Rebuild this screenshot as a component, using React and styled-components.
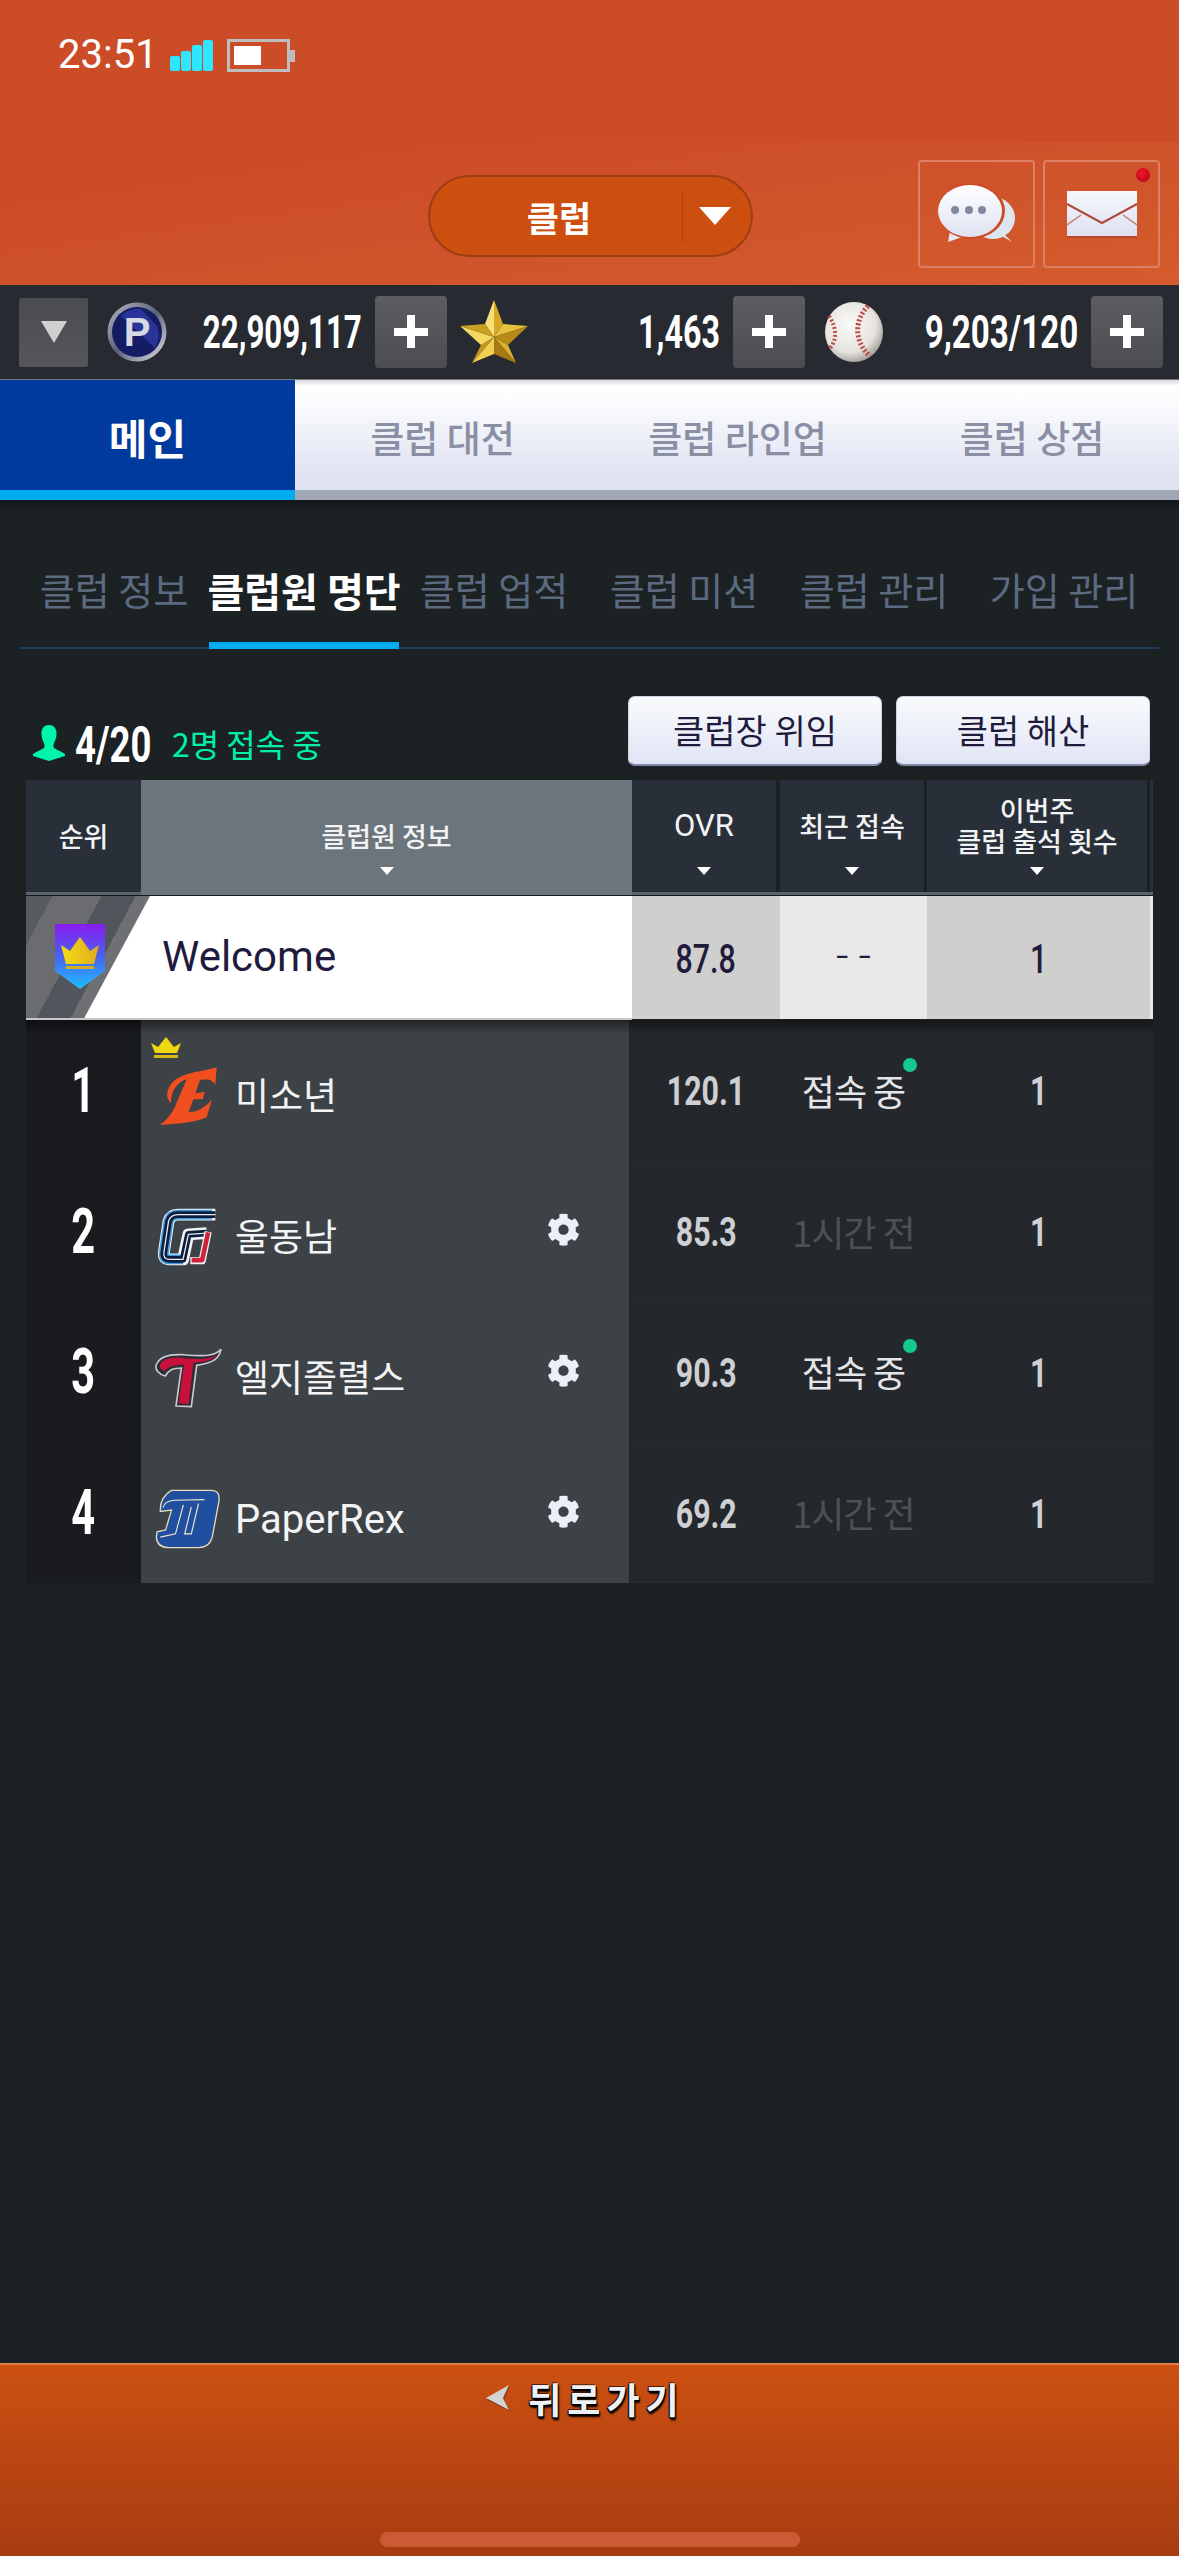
import React from "react";
import styled, { createGlobalStyle } from "styled-components";
import { FaCog } from "react-icons/fa";

const KR = `"Noto Sans CJK KR", "Noto Sans", sans-serif`;
const LAT = `Roboto, "Noto Sans CJK KR", sans-serif`;

const Global = createGlobalStyle`
  html, body { margin: 0; padding: 0; background: #1c2124; }
  * { box-sizing: border-box; }
  #root { width: 1179px; }
`;

const Page = styled.div`
  width: 1179px; height: 2556px; display: flex; flex-direction: column;
  background: #1c2124; overflow: hidden; font-family: ${KR};
`;

/* ---------- header ---------- */
const StatusBar = styled.div`
  height: 142px; background: #cc4c28; display: flex; align-items: flex-start;
  padding: 33px 0 0 58px;
`;
const Clock = styled.span`
  font: 400 40px/44px ${LAT}; color: #fff; width: 112px;
`;
const SignalBars = styled.div`
  display: flex; align-items: flex-end; gap: 1px; height: 31px; margin-top: 7px; width: 57px;
`;
const SignalBar = styled.i`
  display: block; width: 10px; height: ${p => p.$h}px; background: #2ee6ff; border-radius: 2px;
`;
const Battery = styled.div`
  width: 63px; height: 33px; margin-top: 6px; border: 3px solid #bdbdbd; padding: 4px;
  position: relative; display: flex;
  &::after { content: ""; position: absolute; right: -8px; top: 8px; width: 5px; height: 12px; background: #bdbdbd; }
`;
const BatteryFill = styled.i`
  display: block; width: 27px; background: #fff;
`;
const Nav = styled.div`
  height: 143px; background: linear-gradient(172deg, #cc4c28 20%, #d45c2d 100%);
  display: flex; align-items: flex-start; padding: 18px 0 0 428px;
`;
const Pill = styled.div`
  width: 325px; height: 82px; margin-top: 15px; border-radius: 41px;
  background: #cc4f10; border: 2px solid #9e3d14; display: flex; align-items: center;
`;
const PillLabel = styled.span`
  width: 252px; text-align: center; color: #fff; font: 700 35px/1 ${KR}; padding-left: 6px;
`;
const PillDivider = styled.i`
  display: block; width: 1px; height: 53px; background: #a34316;
`;
const PillArrow = styled.div`
  flex: 1; display: flex; justify-content: center; padding-right: 4px;
`;
const Caret = styled.i`
  display: block; width: 0; height: 0;
  border-left: ${p => p.$w / 2}px solid transparent;
  border-right: ${p => p.$w / 2}px solid transparent;
  border-top: ${p => p.$h}px solid ${p => p.$c || "#fff"};
`;
const IconBox = styled.div`
  width: 117px; height: 108px; border: 2px solid #dd7f62; border-radius: 4px;
  display: flex; align-items: center; justify-content: center; position: relative;
  margin-left: ${p => p.$ml}px;
`;
const RedDot = styled.i`
  position: absolute; right: 8px; top: 6px; width: 14px; height: 14px; border-radius: 50%;
  background: radial-gradient(circle at 40% 35%, #f0162a, #b00018);
`;

/* ---------- currency ---------- */
const CurrencyBar = styled.div`
  height: 95px; background: #282a31; display: flex; align-items: center; padding-left: 19px;
  border-bottom: 1px solid #77797f;
`;
const DropButton = styled.div`
  width: 69px; height: 69px; margin-right: 19px; display: flex; align-items: center; justify-content: center;
  background: linear-gradient(#4a4c52, #54565b); border-radius: 2px;
`;
const Slot = styled.div`
  width: ${p => p.$w}px; display: flex; justify-content: flex-end; white-space: nowrap;
`;
const Squeezed = styled.span`
  display: inline-block; font: ${p => p.$wt || 700} ${p => p.$fs}px/1 ${LAT};
  color: ${p => p.$c || "#fff"}; transform: scaleX(${p => p.$sx});
  transform-origin: ${p => p.$origin || "center"}; white-space: nowrap;
`;
const PlusButton = styled.div`
  width: 72px; height: 72px; margin: 0 ${p => p.$mr}px 0 13px; display: flex; align-items: center; justify-content: center;
  background: linear-gradient(#5c5d61, #4c4d52); border-radius: 4px; flex: none;
`;

/* ---------- tabs ---------- */
const Tabs = styled.div`
  height: 120px; display: grid; grid-template-columns: 295px 295px 295px 294px;
`;
const Tab = styled.div`
  display: flex; align-items: center; justify-content: center; padding-top: 4px;
  font: ${p => (p.$active ? 700 : 500)} ${p => (p.$active ? 42 : 37)}px/1 ${KR};
  color: ${p => (p.$active ? "#fff" : "#8a8fa3")};
  background: ${p => (p.$active ? "#003a9c" : "linear-gradient(#d8d9dd 0, #fff 6px, #f7f8fc 30%, #dfe3f2 85%)")};
  border-bottom: 10px solid ${p => (p.$active ? "#00aeef" : "#a0a6b4")};
`;

/* ---------- sub nav ---------- */
const SubNav = styled.div`
  height: 149px; padding: 44px 20px 0 19px; display: grid; grid-template-columns: repeat(6, 190px);
  background: linear-gradient(#11161b, #1c2124 10px);
`;
const SubItem = styled.div`
  height: 105px; display: flex; justify-content: center; padding-top: 24px; white-space: nowrap;
  font: ${p => (p.$active ? 700 : 400)} ${p => (p.$active ? 40 : 38)}px/1.1 ${KR};
  color: ${p => (p.$active ? "#fff" : "#5c6a80")};
  border-bottom: ${p => (p.$active ? "7px solid #00aeef" : "2px solid #1c3a60")};
`;

/* ---------- summary ---------- */
const Summary = styled.div`
  height: 131px; display: flex; align-items: flex-start; padding: 47px 0 0 33px;
`;
const PersonSlot = styled.div`
  margin-top: 29px; display: flex;
`;
const CountWrap = styled.div`
  width: 76px; margin-left: 10px; margin-top: 24px; display: flex; height: 40px;
`;
const OnlineText = styled.span`
  font: 400 32px/1 ${KR}; color: #00f0a8; margin: 31px 0 0 21px; width: 456px; white-space: nowrap; display: block;
`;
const ActionButton = styled.div`
  width: 254px; height: 70px; margin-right: 14px; display: flex; align-items: center; justify-content: center; padding-bottom: 2px;
  font: 400 34px/1 ${KR}; color: #1f1b3d; border-radius: 7px;
  background: linear-gradient(#fafbfe, #e0e4f4); border: 1px solid #cfd3e6; border-bottom: 2px solid #8088a8;
`;

/* ---------- table ---------- */
const Table = styled.div`
  margin-left: 26px; width: 1127px; display: flex; flex-direction: column;
`;
const HeadRow = styled.div`
  height: 116px; display: grid; grid-template-columns: 115px 491px 144px 4px 144px 3px 220px 3px 3px;
  border-bottom: 1px solid #15181c;
`;
const HeadCell = styled.div`
  display: flex; flex-direction: column; align-items: center; justify-content: flex-start;
  background: ${p => (p.$on ? "#6b757b" : "#292f38")};
  border-bottom: 3px solid ${p => (p.$on ? "#6b757b" : "#5a656b")};
  color: #f2f3f4; font: 500 27px/31px ${KR}; text-align: center; position: relative; white-space: nowrap;
  padding-top: ${p => p.$pt}px;
`;
const HeadLatin = styled.span`
  font: 400 31px/31px ${LAT};
`;
const HeadGap = styled.div`
  border-bottom: 3px solid #5a656b;
`;
const CaretSlot = styled.div`
  position: absolute; left: 0; right: 0; bottom: 17px; display: flex; justify-content: center;
`;
const MyRow = styled.div`
  height: 124px; display: grid; grid-template-columns: 606px 148px 147px 223px 3px;
`;
const MyInfo = styled.div`
  background: #fff; position: relative; display: flex; align-items: center; padding-left: 29px;
  border-bottom: 2px solid #c8c8c8;
  &::before {
    content: ""; position: absolute; inset: 0 auto 0 0; width: 124px;
    clip-path: polygon(0 0, 100% 0, 47% 100%, 0 100%);
    background: linear-gradient(118deg, #585b60 0 14%, #6a6c70 14% 40%, #52555b 40% 58%, #6e7074 58% 68%, #5c5f64 68% 80%, #6c6e72 80%);
  }
`;
const BadgeSvg = styled.svg`
  position: relative; flex: none; display: block;
`;
const MyName = styled.span`
  position: relative; margin-left: 57px; font: 400 42px/1 ${LAT}; color: #1f1b3d;
`;
const MyCell = styled.div`
  background: ${p => p.$bg}; display: flex; align-items: center; justify-content: center;
  font: 400 40px/1 ${LAT}; color: #1f1b3d; padding-top: 4px; margin-bottom: 1px;
`;
const Dashes = styled.span`
  font: 300 44px/1 ${LAT}; letter-spacing: 10px; margin-right: -10px; margin-top: -8px; color: #1f1b3d;
`;
const Rows = styled.div`
  height: 563px; display: grid; grid-auto-rows: 1fr; position: relative;
  &::after {
    content: ""; position: absolute; left: 0; right: 0; top: 0; height: 14px;
    background: linear-gradient(rgba(0,0,0,.45), rgba(0,0,0,0)); pointer-events: none;
  }
`;
const Row = styled.div`
  display: grid; grid-template-columns: 115px 488px 3px 148px 147px 223px 3px;
  background: #24272b;
`;
const RankCell = styled.div`
  background: #1a1b1f; display: flex; align-items: center; justify-content: center;
`;
const InfoCell = styled.div`
  background: #3d4247; position: relative; display: flex; align-items: center; padding: 12px 0 0 12px;
`;
const LeaderCrown = styled.svg`
  position: absolute; left: 10px; top: 17px; display: block;
`;
const LogoSlot = styled.div`
  width: 70px; height: 60px; flex: none; display: flex; align-items: center; justify-content: center;
`;
const Name = styled.span`
  margin: 3px 0 0 12px; font: 400 ${p => (p.$latin ? 40 : 37)}px/1 ${LAT}; color: #f2f3f5; white-space: nowrap;
`;
const GearSlot = styled.div`
  position: absolute; right: 49px; top: 50%; transform: translateY(-54%); color: #eceff8; display: flex;
`;
const ValueCell = styled.div`
  display: flex; align-items: center; justify-content: center; position: relative; padding-top: ${p => p.$pt || 0}px;
  border-bottom: 1px solid rgba(255,255,255,.025);
`;
const StatusText = styled.span`
  position: relative; font: 400 36px/1 ${KR}; color: ${p => (p.$on ? "#e4e5e8" : "#4c5156")}; letter-spacing: -1px; white-space: nowrap;
`;
const OnlineDot = styled.i`
  position: absolute; right: -12px; top: -14px; width: 14px; height: 14px; border-radius: 50%; background: #14c98c;
`;

/* ---------- footer ---------- */
const Footer = styled.div`
  margin-top: auto; height: 193px; border-top: 2px solid #e57a45;
  background: linear-gradient(#cc5012, #a83c12); display: flex; flex-direction: column; align-items: center;
`;
const BackRow = styled.div`
  display: flex; align-items: center; gap: 18px; margin-top: 13px; height: 40px; padding-right: 14px;
`;
const BackText = styled.span`
  font: 700 36px/40px ${KR}; letter-spacing: 6px; color: #eef2f6; margin-right: -6px;
  text-shadow: 0 2px 0 #000, 1px 3px 2px #000, -1px 1px 1px #000, 1px 1px 1px #000, -1px -1px 0 rgba(0,0,0,.6);
`;
const HomeBar = styled.i`
  display: block; width: 420px; height: 15px; border-radius: 8px; background: #cb5a35; margin-top: 114px;
`;

/* ---------- drawings ---------- */
const Plus = () => (
  <svg width="34" height="34" viewBox="0 0 34 34">
    <rect x="13" y="1" width="8" height="32" fill="#000" opacity=".35" />
    <rect x="0" y="13" width="34" height="8" fill="#fff" />
    <rect x="13" y="0" width="8" height="33" fill="#fff" />
  </svg>
);

const Coin = () => (
  <svg width="60" height="60" viewBox="0 0 60 60">
    <defs>
      <linearGradient id="coinRim" x1="0" y1="0" x2="1" y2="1">
        <stop offset="0" stopColor="#b8bcc8" /><stop offset=".5" stopColor="#5a6078" /><stop offset="1" stopColor="#e6e8ee" />
      </linearGradient>
    </defs>
    <circle cx="30" cy="30" r="29.5" fill="url(#coinRim)" />
    <circle cx="30" cy="30" r="25" fill="#141c64" />
    <path d="M14 14 L48 46 A25 25 0 0 0 50 24 L34 7 A25 25 0 0 0 14 14Z" fill="#28349a" />
    <text x="30" y="44" textAnchor="middle" fontFamily="Liberation Sans, sans-serif" fontWeight="700" fontSize="40" fill="#d6dae4">P</text>
  </svg>
);

const Star = () => {
  const c = [34, 37];
  const outer = [[34, 0], [68, 26], [56, 63], [12, 63], [0, 26]];
  const inner = [[43, 24], [48, 45], [34, 54], [21, 45], [25, 24]];
  const light = ["#f6e07a", "#e8c23c", "#dcb030", "#f0d050", "#f4d95e"];
  const dark = ["#d8a824", "#b98a18", "#a87a12", "#c4961e", "#cc9e20"];
  const tris = [];
  outer.forEach((o, i) => {
    const prev = inner[(i + 4) % 5];
    const next = inner[i];
    tris.push(<polygon key={`a${i}`} points={`${c} ${prev} ${o}`} fill={light[i]} />);
    tris.push(<polygon key={`b${i}`} points={`${c} ${o} ${next}`} fill={dark[i]} />);
  });
  return <svg width="68" height="64" viewBox="0 0 68 64">{tris}</svg>;
};

const Ball = () => (
  <svg width="60" height="60" viewBox="0 0 60 60">
    <defs>
      <radialGradient id="ballFill" cx=".42" cy=".38" r=".7">
        <stop offset="0" stopColor="#fafafa" /><stop offset=".65" stopColor="#e6e3de" /><stop offset="1" stopColor="#8f8a84" />
      </radialGradient>
    </defs>
    <ellipse cx="30" cy="30" rx="29" ry="30" fill="url(#ballFill)" />
    <path d="M44 4 C30 18 30 40 46 54" fill="none" stroke="#c24a44" strokeWidth="5" strokeDasharray="2 2" />
    <path d="M5 14 C13 26 13 38 6 46" fill="none" stroke="#c24a44" strokeWidth="4" strokeDasharray="2 2" />
  </svg>
);

const Chat = () => (
  <svg width="78" height="60" viewBox="0 0 78 60">
    <defs>
      <linearGradient id="bubble" x1="0" y1="0" x2="0" y2="1">
        <stop offset="0" stopColor="#ffffff" /><stop offset="1" stopColor="#dfe2f2" />
      </linearGradient>
    </defs>
    <path d="M74 58 L66 50 L54 54 L50 44 Z" fill="#dde6ef" />
    <ellipse cx="55" cy="34" rx="22" ry="21" fill="#dde6ef" />
    <path d="M10 58 L12 47 L24 53 Z" fill="#e6e8f5" />
    <ellipse cx="33" cy="27" rx="34" ry="28" fill="#cc4c28" />
    <ellipse cx="32" cy="27" rx="32" ry="26" fill="url(#bubble)" />
    <circle cx="17" cy="26" r="4" fill="#7f8aa0" />
    <circle cx="31" cy="26" r="4" fill="#7f8aa0" />
    <circle cx="44" cy="26" r="4" fill="#7f8aa0" />
  </svg>
);

const Mail = () => (
  <svg width="70" height="47" viewBox="0 0 70 47">
    <defs>
      <linearGradient id="mailFill" x1="0" y1="0" x2="0" y2="1">
        <stop offset="0" stopColor="#f6f7fc" /><stop offset="1" stopColor="#dde1f1" />
      </linearGradient>
    </defs>
    <rect x="0" y="0" width="70" height="45" fill="url(#mailFill)" />
    <rect x="0" y="45" width="70" height="2" fill="#a8402a" opacity=".6" />
    <polyline points="0,13 35,32 70,13" fill="none" stroke="#b04a38" strokeWidth="2" />
    <path d="M0 34 L14 24 M70 34 L56 24" stroke="#c47c6c" strokeWidth="1.5" />
  </svg>
);

const Person = () => (
  <svg width="32" height="36" viewBox="0 0 32 36">
    <path d="M16 0 C22 0 24 5 23.5 10 C23 16 20 18 20.5 22 C21 24 28 26 32 29 L32 31 L16 36 L0 31 L0 29 C4 26 11 24 11.5 22 C12 18 9 16 8.5 10 C8 5 10 0 16 0Z" fill="#00f5ac" />
  </svg>
);

const Badge = () => (
  <BadgeSvg width="50" height="66" viewBox="0 0 50 66">
    <defs>
      <linearGradient id="badgeFill" x1="0" y1="0" x2="0" y2="1">
        <stop offset="0" stopColor="#8a1cf0" /><stop offset=".5" stopColor="#4a62f0" /><stop offset="1" stopColor="#1ec0ff" />
      </linearGradient>
      <linearGradient id="goldFill" x1="0" y1="0" x2="1" y2="0">
        <stop offset="0" stopColor="#f4de10" /><stop offset="1" stopColor="#e0aa20" />
      </linearGradient>
    </defs>
    <polygon points="0,0 50,0 50,47 25,65 0,47" fill="url(#badgeFill)" />
    <polygon points="6,21 15,27 25,13 35,27 44,21 39,40 11,40" fill="url(#goldFill)" />
    <rect x="11" y="42" width="28" height="3" fill="#d8a828" />
  </BadgeSvg>
);

const SmallCrown = () => (
  <LeaderCrown width="30" height="21" viewBox="0 0 30 21">
    <polygon points="0,6 7,10 15,0 23,10 30,6 26,16 4,16" fill="#f0d810" />
    <rect x="3" y="18" width="24" height="3" fill="#d8b818" />
  </LeaderCrown>
);

const LogoE = () => (
  <svg width="60" height="60" viewBox="88 108 176 180">
    <path d="M262 112 L258 166 C252 150 238 146 212 150 L198 190 L226 186 L220 208 L192 208 L178 246 C200 248 226 235 248 208 L232 262 C200 278 140 282 92 285 C110 272 125 255 135 235 L172 148 C150 155 125 175 125 218 C105 205 112 165 145 145 C180 125 220 125 262 112 Z" fill="#f04e1f" />
  </svg>
);

const gPath = "M226 72 L112 72 Q90 72 84 92 L70 186 Q66 208 88 208 L128 208 L144 132 L200 128";

const LogoG = () => (
  <svg width="60" height="58" viewBox="52 52 182 176">
    <path d={gPath} fill="none" stroke="#eef3f8" strokeWidth="36" strokeLinejoin="round" />
    <path d="M216 72 L112 72 Q90 72 84 92 L70 186 Q66 208 88 208 L128 208" fill="none" stroke="#3d9be0" strokeWidth="30" strokeLinejoin="round" />
    <path d={gPath} fill="none" stroke="#0e1c3c" strokeWidth="20" strokeLinejoin="round" />
    <path d={gPath} fill="none" stroke="#e8edf4" strokeWidth="4" strokeLinejoin="round" />
    <path d="M204 124 L186 212 L150 212" fill="none" stroke="#eef3f8" strokeWidth="22" strokeLinejoin="round" />
    <path d="M204 126 L186 210 L154 210" fill="none" stroke="#d0203a" strokeWidth="14" strokeLinejoin="round" />
  </svg>
);

const LogoT = () => (
  <svg width="68" height="60" viewBox="44 52 204 180">
    <path d="M245 56 C240 82 225 96 172 104 L156 228 L110 226 L126 112 C100 112 88 118 78 136 C60 132 44 116 52 100 C62 78 90 70 130 72 C180 76 225 80 245 56Z" fill="#2c2e34" stroke="#c8c8ce" strokeWidth="5" />
    <path d="M232 72 C222 86 210 92 162 96 L148 220 L118 218 L134 102 C100 102 84 108 76 122 C62 116 58 106 64 98 C72 84 96 80 130 82 C170 86 210 88 232 72Z" fill="#c8103c" />
  </svg>
);

const LogoD = () => (
  <svg width="66" height="60" viewBox="44 476 196 182">
    <path d="M92 480 L212 480 Q240 480 236 512 L216 620 Q208 654 174 654 L84 654 Q48 654 46 622 L48 606 L74 600 L92 540 L58 544 Q56 500 92 480Z" fill="#1f4f9e" stroke="#e6dab6" strokeWidth="4" />
    <path d="M66 532 Q72 512 100 510 L192 508" fill="none" stroke="#efe8d2" strokeWidth="3.5" />
    <path d="M128 524 L104 612 L58 622" fill="none" stroke="#efe8d2" strokeWidth="3.5" />
    <path d="M174 520 L152 612 L132 612 L152 530" fill="none" stroke="#efe8d2" strokeWidth="3.5" />
  </svg>
);

const Back = () => (
  <svg width="24" height="26" viewBox="0 0 24 26">
    <polygon points="23,0 17,13 23,25 0,14" fill="#3a2a20" opacity=".55" transform="translate(1 1)" />
    <polygon points="23,0 17,13 23,25 0,13" fill="#d2d3d4" />
  </svg>
);

const members = [
  { rank: "1", logo: <LogoE />, name: "미소년", ovr: "120.1", on: true, leader: true },
  { rank: "2", logo: <LogoG />, name: "울동남", ovr: "85.3", on: false },
  { rank: "3", logo: <LogoT />, name: "엘지졸렬스", ovr: "90.3", on: true },
  { rank: "4", logo: <LogoD />, name: "PaperRex", ovr: "69.2", on: false, latin: true },
];

export default function App() {
  return (
    <Page>
      <Global />
      <StatusBar>
        <Clock>23:51</Clock>
        <SignalBars>
          {[15, 20, 26, 31].map(h => <SignalBar key={h} $h={h} />)}
        </SignalBars>
        <Battery><BatteryFill /></Battery>
      </StatusBar>
      <Nav>
        <Pill>
          <PillLabel>클럽</PillLabel>
          <PillDivider />
          <PillArrow><Caret $w={32} $h={18} /></PillArrow>
        </Pill>
        <IconBox $ml={165}><Chat /></IconBox>
        <IconBox $ml={8}><Mail /><RedDot /></IconBox>
      </Nav>

      <CurrencyBar>
        <DropButton><Caret $w={26} $h={22} $c="#d0d0d0" /></DropButton>
        <Coin />
        <Slot $w={195}><Squeezed $fs={46} $sx={0.68} $origin="right center">22,909,117</Squeezed></Slot>
        <PlusButton $mr={13}><Plus /></PlusButton>
        <Star />
        <Slot $w={192}><Squeezed $fs={46} $sx={0.7} $origin="right center">1,463</Squeezed></Slot>
        <PlusButton $mr={19}><Plus /></PlusButton>
        <Ball />
        <Slot $w={194}><Squeezed $fs={46} $sx={0.72} $origin="right center">9,203/120</Squeezed></Slot>
        <PlusButton $mr={0}><Plus /></PlusButton>
      </CurrencyBar>

      <Tabs>
        <Tab $active>메인</Tab>
        <Tab>클럽 대전</Tab>
        <Tab>클럽 라인업</Tab>
        <Tab>클럽 상점</Tab>
      </Tabs>

      <SubNav>
        <SubItem>클럽 정보</SubItem>
        <SubItem $active>클럽원 명단</SubItem>
        <SubItem>클럽 업적</SubItem>
        <SubItem>클럽 미션</SubItem>
        <SubItem>클럽 관리</SubItem>
        <SubItem>가입 관리</SubItem>
      </SubNav>

      <Summary>
        <PersonSlot><Person /></PersonSlot>
        <CountWrap><Squeezed $fs={50} $sx={0.73} $origin="left center">4/20</Squeezed></CountWrap>
        <OnlineText>2명 접속 중</OnlineText>
        <ActionButton>클럽장 위임</ActionButton>
        <ActionButton>클럽 해산</ActionButton>
      </Summary>

      <Table>
        <HeadRow>
          <HeadCell $pt={40}>순위</HeadCell>
          <HeadCell $on $pt={40}>클럽원 정보<CaretSlot><Caret $w={14} $h={8} /></CaretSlot></HeadCell>
          <HeadCell $pt={30}><HeadLatin>OVR</HeadLatin><CaretSlot><Caret $w={14} $h={8} /></CaretSlot></HeadCell>
          <HeadGap />
          <HeadCell $pt={30}>최근 접속<CaretSlot><Caret $w={14} $h={8} /></CaretSlot></HeadCell>
          <HeadGap />
          <HeadCell $pt={14}>이번주<br />클럽 출석 횟수<CaretSlot><Caret $w={14} $h={8} /></CaretSlot></HeadCell>
          <HeadGap />
          <HeadCell $pt={0} />
        </HeadRow>

        <MyRow>
          <MyInfo><Badge /><MyName>Welcome</MyName></MyInfo>
          <MyCell $bg="#cfcfcd"><Squeezed $wt={500} $fs={41} $sx={0.74} $c="#1f1b3d">87.8</Squeezed></MyCell>
          <MyCell $bg="#e8e8e8"><Dashes>--</Dashes></MyCell>
          <MyCell $bg="#cfcfcd"><Squeezed $wt={500} $fs={41} $sx={0.74} $c="#1f1b3d">1</Squeezed></MyCell>
          <MyCell $bg="#e8e8e8" />
        </MyRow>

        <Rows>
          {members.map(m => (
            <Row key={m.rank}>
              <RankCell><Squeezed $fs={63} $sx={0.66}>{m.rank}</Squeezed></RankCell>
              <InfoCell>
                {m.leader && <SmallCrown />}
                <LogoSlot>{m.logo}</LogoSlot>
                <Name $latin={m.latin}>{m.name}</Name>
                {!m.leader && <GearSlot><FaCog size={33} /></GearSlot>}
              </InfoCell>
              <div />
              <ValueCell $pt={4}><Squeezed $wt={700} $fs={41} $sx={0.74} $c="#cfd0d3">{m.ovr}</Squeezed></ValueCell>
              <ValueCell>
                <StatusText $on={m.on}>
                  {m.on ? "접속 중" : "1시간 전"}
                  {m.on && <OnlineDot />}
                </StatusText>
              </ValueCell>
              <ValueCell $pt={4}><Squeezed $wt={700} $fs={41} $sx={0.74} $c="#cfd0d3">1</Squeezed></ValueCell>
              <div />
            </Row>
          ))}
        </Rows>
      </Table>

      <Footer>
        <BackRow><Back /><BackText>뒤로가기</BackText></BackRow>
        <HomeBar />
      </Footer>
    </Page>
  );
}
